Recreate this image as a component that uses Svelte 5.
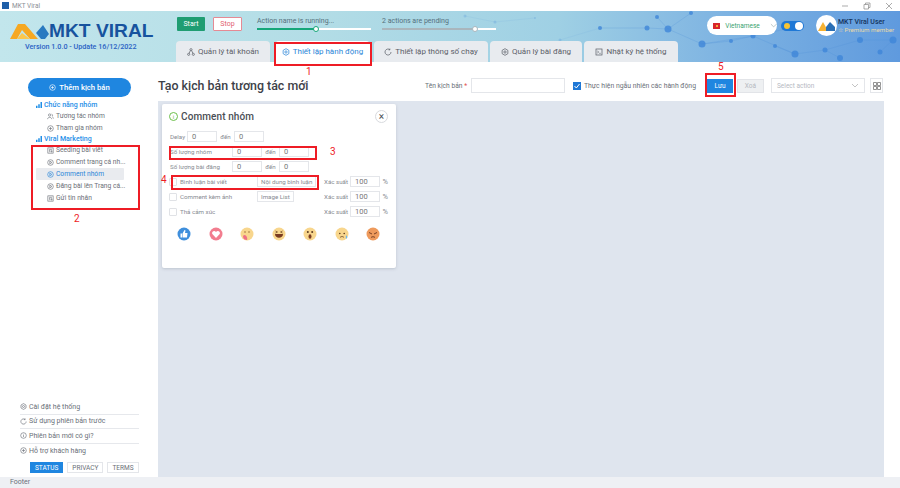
<script>
    const tabs = [
        { label: "Quản lý tài khoản", icon: "tree", width: 94 },
        { label: "Thiết lập hành động", icon: "gear", width: 95, active: true },
        { label: "Thiết lập thông số chạy", icon: "sync", width: 114 },
        { label: "Quản lý bài đăng", icon: "gear", width: 92 },
        { label: "Nhật ký hệ thống", icon: "log", width: 94 },
    ];
    const groupItems = [
        { label: "Tương tác nhóm", icon: "people" },
        { label: "Tham gia nhóm", icon: "plus" },
    ];
    const viralItems = [
        { label: "Seeding bài viết", icon: "doc" },
        { label: "Comment trang cá nh...", icon: "play" },
        { label: "Comment nhóm", icon: "play", active: true },
        { label: "Đăng bài lên Trang cá...", icon: "play" },
        { label: "Gửi tin nhắn", icon: "doc" },
    ];
    const bottomLinks = [
        { label: "Cài đặt hệ thống", icon: "gear" },
        { label: "Sử dụng phiên bản trước", icon: "sync" },
        { label: "Phiên bản mới có gì?", icon: "info" },
        { label: "Hỗ trợ khách hàng", icon: "plus" },
    ];
    const nodes = [
        [465, 16, 1.5], [495, 22, 1.5], [535, 18, 1], [560, 40, 1.5], [600, 28, 2], [647, 28, 2.5],
        [657, 17, 2], [668, 29, 3.5], [691, 13, 2], [702, 44, 3.5], [731, 41, 2], [753, 36, 2.5],
        [786, 29, 2], [795, 54, 3.5], [825, 50, 2.5], [860, 40, 3], [893, 40, 3.5], [880, 52, 2.5],
        [775, 46, 2], [840, 58, 3],
    ];
    const links = [
        [465, 16, 495, 22], [495, 22, 535, 18], [600, 28, 647, 28], [647, 28, 668, 29], [657, 17, 668, 29],
        [668, 29, 702, 44], [691, 13, 668, 29], [702, 44, 731, 41], [731, 41, 753, 36], [753, 36, 786, 29],
        [702, 44, 753, 36], [753, 36, 795, 54], [795, 54, 825, 50], [825, 50, 860, 40], [860, 40, 893, 40],
        [893, 40, 880, 52], [775, 46, 795, 54], [825, 50, 840, 58], [560, 40, 600, 28],
    ];
    const reactions = [
        { base: "#3f8fdc", kind: "like" },
        { base: "#f27d8f", kind: "love" },
        { base: "#f8d68d", kind: "care" },
        { base: "#f8d68d", kind: "haha" },
        { base: "#f8d68d", kind: "wow" },
        { base: "#f8d68d", kind: "sad" },
        { base: "#ee9a5c", kind: "angry" },
    ];
</script>

{#snippet icon(name)}
    <svg class="ico" viewBox="0 0 12 12" fill="none" stroke="currentColor" stroke-width="1.1">
        {#if name === "tree"}
            <circle cx="6" cy="2.5" r="1.6" /><circle cx="2.5" cy="9.5" r="1.6" /><circle cx="9.5" cy="9.5" r="1.6" />
            <path d="M5 4 3.2 8M7 4l1.8 4" />
        {:else if name === "gear"}
            <circle cx="6" cy="6" r="1.7" />
            <path d="M6 1 10.3 3.5V8.5L6 11 1.7 8.5V3.5Z" />
        {:else if name === "sync"}
            <path d="M10.5 6A4.5 4.5 0 1 1 8.8 2.5M8.8.8v2H6.8" />
        {:else if name === "log"}
            <rect x="1.5" y="1.5" width="9" height="9" /><path d="M3.5 4.5 5.5 6l-2 1.5M6.5 8h2" />
        {:else if name === "people"}
            <circle cx="4.5" cy="3.5" r="2" /><path d="M1 10.5c0-4 7-4 7 0M8 2c2 .5 2 3 .5 3.5M9 6.5c1.5.5 2 2 2 3" />
        {:else if name === "plus"}
            <circle cx="6" cy="6" r="4.8" /><path d="M6 3.5v5M3.5 6h5" />
        {:else if name === "doc"}
            <rect x="1.5" y="1.5" width="9" height="9" /><path d="M3.5 4h5M3.5 6h2M7 6.5h1.5v2H7zM3.5 8h2" />
        {:else if name === "play"}
            <circle cx="6" cy="6" r="4.8" /><path d="M4.8 3.6 8.4 6 4.8 8.4Z" />
        {:else if name === "info"}
            <circle cx="6" cy="6" r="4.8" /><path d="M6 5.3v3.2M6 3.2v1" />
        {/if}
    </svg>
{/snippet}

{#snippet bars()}
    <svg class="bars" viewBox="0 0 8 8" fill="#1f8fe8">
        <rect x="0" y="5" width="2" height="3" /><rect x="3" y="3" width="2" height="5" /><rect x="6" y="0" width="2" height="8" />
    </svg>
{/snippet}

<div class="app">
    <div class="titlebar">
        <div class="app-icon"></div>
        <span>MKT Viral</span>
        <div class="win-buttons">
            <svg viewBox="0 0 8 8"><path d="M1 4h6" /></svg>
            <svg viewBox="0 0 8 8"><path d="M1 2.5h4.5V7H1zM2.5 2.5V1H7v4.5H5.5" /></svg>
            <svg viewBox="0 0 8 8"><path d="M1 1l6 6M7 1 1 7" /></svg>
        </div>
    </div>

    <header class="header">
        <svg class="network" viewBox="0 0 900 51" preserveAspectRatio="none">
            <g transform="translate(0 -11)">
                {#each links as l}
                    <line class:faint={l[0] < 600} x1={l[0]} y1={l[1]} x2={l[2]} y2={l[3]} />
                {/each}
                {#each nodes as n}
                    <circle class:faint={n[0] < 600} cx={n[0]} cy={n[1]} r={n[2]} />
                {/each}
            </g>
        </svg>

        <div class="brand">
            <div class="logo">
                <svg width="39" height="18" viewBox="0 0 39 18">
                    <path d="M0 17 8 2h7l13 15H20L12 8 7 17Z" fill="#f6a821" />
                    <path d="M7 17 12 11 20 17Z" fill="#fbc74e" />
                    <path d="M26 11 33 3l6 9-4 5h-4Z" fill="#2a7ac0" />
                </svg>
                <span>MKT VIRAL</span>
            </div>
            <div class="version">Version 1.0.0 - Update 16/12/2022</div>
        </div>

        <div class="center">
            <div class="controls">
                <button class="start">Start</button>
                <button class="stop">Stop</button>
                <div class="progress first">
                    <span>Action name is running...</span>
                    <div class="track"><div class="fill"></div><div class="knob"></div></div>
                </div>
                <div class="progress second">
                    <span>2 actions are pending</span>
                    <div class="track"><div class="fill"></div><div class="knob"></div></div>
                </div>
            </div>
            <nav class="tabs">
                {#each tabs as tab}
                    <div class="tab" class:active={tab.active} style="width:{tab.width}px">
                        {@render icon(tab.icon)}
                        <span>{tab.label}</span>
                    </div>
                {/each}
            </nav>
        </div>

        <div class="user-area">
            <div class="lang">
                <span class="flag"><i></i></span>
                <span class="lang-name">Vietnamese</span>
                <svg viewBox="0 0 8 5" width="8" height="5"><path d="M1 1l3 3 3-3" /></svg>
            </div>
            <div class="theme"><i class="sun"></i><i class="dot"></i></div>
            <div class="avatar">
                <svg width="18" height="10" viewBox="0 0 18 10">
                    <path d="M0 10 5 1l5 9Z" fill="#f6b233" />
                    <path d="M8 10V6l4-5 5 5v4Z" fill="#2a6fb5" />
                </svg>
            </div>
            <div class="user-text">
                <b>MKT Viral User</b>
                <span>☆ Premium member</span>
            </div>
        </div>
    </header>

    <div class="body">
        <aside class="sidebar">
            <button class="add">{@render icon("plus")} Thêm kịch bản</button>
            <div class="menu">
                <div class="group">{@render bars()} Chức năng nhóm</div>
                {#each groupItems as item}
                    <div class="item">{@render icon(item.icon)}<span>{item.label}</span></div>
                {/each}
                <div class="group">{@render bars()} Viral Marketing</div>
                {#each viralItems as item}
                    <div class="item" class:active={item.active}>{@render icon(item.icon)}<span>{item.label}</span></div>
                {/each}
            </div>
            <div class="bottom">
                {#each bottomLinks as link}
                    <div class="link">{@render icon(link.icon)}<span>{link.label}</span></div>
                {/each}
                <div class="legal">
                    <span class="on">STATUS</span>
                    <span>PRIVACY</span>
                    <span>TERMS</span>
                </div>
            </div>
        </aside>

        <main class="main">
            <div class="toolbar">
                <h1>Tạo kịch bản tương tác mới</h1>
                <label class="name-label" for="script-name">Tên kịch bản <em>*</em></label>
                <input id="script-name" class="name-input" />
                <span class="random-check"><svg viewBox="0 0 8 8"><path d="M1.500 4 3.300 6 6.500 2" /></svg></span>
                <span class="random-text">Thực hiện ngẫu nhiên các hành động</span>
                <button class="save">Lưu</button>
                <button class="del">Xoá</button>
                <div class="select">
                    <span>Select action</span>
                    <svg viewBox="0 0 8 5" width="8" height="5"><path d="M1 1l3 3 3-3" /></svg>
                </div>
                <div class="grid-btn">
                    <svg viewBox="0 0 8 8" width="8" height="8"><path d="M.5.500h3v3h-3zM4.500.500h3v3h-3zM.5 4.500h3v3h-3zM4.500 4.500h3v3h-3z" /></svg>
                </div>
            </div>

            <div class="canvas">
                <section class="card">
                    <div class="card-head">
                        <span class="info-ring">i</span>
                        <strong>Comment nhóm</strong>
                        <span class="close">×</span>
                    </div>

                    <div class="row delay">
                        <span class="label short">Delay</span>
                        <span class="num">0</span>
                        <span class="den">đến</span>
                        <span class="num">0</span>
                    </div>
                    <div class="row">
                        <span class="label">Số lượng nhóm</span>
                        <span class="num">0</span>
                        <span class="den">đến</span>
                        <span class="num">0</span>
                    </div>
                    <div class="row">
                        <span class="label">Số lượng bài đăng</span>
                        <span class="num">0</span>
                        <span class="den">đến</span>
                        <span class="num">0</span>
                    </div>

                    <div class="row">
                        <span class="box"></span>
                        <span class="check-label">Bình luận bài viết</span>
                        <span class="mini">Nội dung bình luận</span>
                        <span class="chance">Xác suất</span>
                        <span class="num">100</span>
                        <span class="pct">%</span>
                    </div>
                    <div class="row">
                        <span class="box"></span>
                        <span class="check-label">Comment kèm ảnh</span>
                        <span class="mini">Image List</span>
                        <span class="chance">Xác suất</span>
                        <span class="num">100</span>
                        <span class="pct">%</span>
                    </div>
                    <div class="row">
                        <span class="box"></span>
                        <span class="check-label">Thả cảm xúc</span>
                        <span class="chance">Xác suất</span>
                        <span class="num">100</span>
                        <span class="pct">%</span>
                    </div>

                    <div class="reactions">
                        {#each reactions as r}
                            <svg width="14" height="14" viewBox="0 0 14 14">
                                <circle cx="7" cy="7" r="6.500" fill={r.base} />
                                {#if r.kind === "like"}
                                    <path d="M3.500 6.500h1.500v4H3.500ZM5.500 6.500 7.500 3l1 .5-.5 2.500h2.500l-.5 4.500H5.500Z" fill="#fff" />
                                {:else if r.kind === "love"}
                                    <path d="M7 11 3.300 7C2 4.800 5.500 2.600 7 5c1.500-2.400 5-.2 3.700 2Z" fill="#fff" />
                                {:else if r.kind === "care"}
                                    <circle cx="5" cy="5" r=".7" fill="#8a5a2b" /><circle cx="9" cy="5" r=".7" fill="#8a5a2b" />
                                    <path d="M3 9c2-3 5 1 4 4-2 0-4-1-4-4Z" fill="#ef6f86" />
                                {:else if r.kind === "haha"}
                                    <path d="M3.500 4 5.500 5 3.500 6M10.500 4 8.500 5 10.500 6" stroke="#6b4423" stroke-width=".7" fill="none" />
                                    <path d="M3 7h8c0 5-8 5-8 0Z" fill="#7a3c22" />
                                {:else if r.kind === "wow"}
                                    <circle cx="4.800" cy="5" r="1" fill="#5b3a1e" /><circle cx="9.200" cy="5" r="1" fill="#5b3a1e" />
                                    <ellipse cx="7" cy="9.500" rx="1.500" ry="2.200" fill="#7a3c22" />
                                {:else if r.kind === "sad"}
                                    <circle cx="4.800" cy="6.500" r=".8" fill="#5b3a1e" /><circle cx="9.200" cy="6.500" r=".8" fill="#5b3a1e" />
                                    <path d="M5 10.500c1-1.300 3-1.300 4 0" stroke="#5b3a1e" stroke-width=".7" fill="none" />
                                    <path d="M11.500 8c1 1.500 1 3.500 0 3.500S10.500 9.500 11.500 8Z" fill="#66b7ee" />
                                {:else}
                                    <path d="M3 5.500 6 7M11 5.500 8 7" stroke="#5b2a16" stroke-width=".8" />
                                    <path d="M5 10.500c1-1 3-1 4 0" stroke="#5b2a16" stroke-width=".8" fill="none" />
                                {/if}
                            </svg>
                        {/each}
                    </div>
                </section>
            </div>
        </main>
    </div>

    <footer class="footer">Footer</footer>

    <!-- annotations drawn on top of the screenshot -->
    <div class="mark m1"></div><b class="num-mark n1">1</b>
    <div class="mark m2"></div><b class="num-mark n2">2</b>
    <div class="mark m3"></div><b class="num-mark n3">3</b>
    <div class="mark m4"></div><b class="num-mark n4">4</b>
    <div class="mark m5"></div><b class="num-mark n5">5</b>
</div>

<style>
    :global(body) {
        margin: 0;
        overflow: hidden;
    }
    .app {
        position: relative;
        width: 900px;
        height: 488px;
        display: flex;
        flex-direction: column;
        background: #fff;
        color: #6a6f78;
        font-family: Roboto, "Noto Sans", sans-serif;
        font-size: 7px;
    }
    .ico {
        width: 7px;
        height: 7px;
        flex: none;
    }
    button {
        font-family: inherit;
        border: none;
        padding: 0;
    }

    .titlebar {
        height: 11px;
        flex: none;
        display: flex;
        align-items: center;
        gap: 3px;
        padding-left: 2px;
        font-size: 6.500px;
        color: #8a8f96;
    }
    .app-icon {
        width: 7px;
        height: 7px;
        background: #1f5fa8;
    }
    .win-buttons {
        margin-left: auto;
        display: flex;
        gap: 14px;
        padding-right: 7px;
    }
    .win-buttons svg {
        width: 8px;
        height: 8px;
        fill: none;
        stroke: #888;
        stroke-width: 0.7;
    }

    .header {
        position: relative;
        height: 51px;
        flex: none;
        display: flex;
        overflow: hidden;
        background: linear-gradient(90deg, #c2e6ec 0%, #b3dde6 35%, #9fd0e4 62%, #7fb4e2 80%, #5f9ade 100%);
    }
    .network {
        position: absolute;
        inset: 0;
        width: 100%;
        height: 100%;
    }
    .network line {
        stroke: #4f8fd8;
        stroke-width: 0.4;
        opacity: 0.6;
    }
    .network circle {
        fill: #3f86d8;
        opacity: 0.8;
    }
    .network .faint {
        opacity: 0.22;
    }
    .brand {
        position: relative;
        width: 176px;
        flex: none;
        display: flex;
        flex-direction: column;
        padding: 9px 0 0 10px;
        box-sizing: border-box;
    }
    .logo {
        display: flex;
        align-items: center;
        height: 19px;
        margin-top: 1px;
    }
    .logo span {
        font: 700 19.200px/19px "Liberation Sans", sans-serif;
        color: #17539e;
        white-space: nowrap;
    }
    .version {
        margin: 2px 0 0 15px;
        font-size: 7.200px;
        font-weight: 500;
        color: #2a62c4;
        white-space: nowrap;
    }
    .center {
        position: relative;
        display: flex;
        flex-direction: column;
        justify-content: space-between;
    }
    .controls {
        display: flex;
        height: 30px;
        padding: 6px 0 0 1px;
        box-sizing: border-box;
    }
    .start,
    .stop {
        width: 28px;
        height: 14px;
        font-size: 7px;
        border-radius: 1px;
    }
    .start {
        background: #1f9d72;
        color: #fff;
    }
    .stop {
        width: 29px;
        margin-left: 8px;
        background: #fff;
        color: #e2606e;
        border: 1px solid #e58a94;
        box-sizing: border-box;
    }
    .progress {
        position: relative;
        width: 114px;
        display: flex;
        flex-direction: column;
        gap: 3px;
        font-size: 7px;
        color: #55707c;
    }
    .progress.first {
        margin-left: 15px;
    }
    .progress.second {
        margin-left: 11px;
    }
    .track {
        position: relative;
        height: 1.500px;
        background: #fff;
    }
    .fill {
        height: 100%;
    }
    .first .fill {
        width: 50%;
        background: #16a679;
    }
    .second .fill {
        width: 80%;
        background: #a9b6bd;
    }
    .knob {
        position: absolute;
        top: -2.500px;
        width: 6px;
        height: 6px;
        border-radius: 50%;
        background: #fff;
        border: 1px solid #16a679;
        box-sizing: border-box;
    }
    .first .knob {
        left: 49%;
    }
    .second .knob {
        left: 79%;
        border-color: #a9b6bd;
    }
    .tabs {
        display: flex;
        gap: 2px;
        height: 21px;
    }
    .tab {
        display: flex;
        align-items: center;
        justify-content: center;
        gap: 3px;
        height: 21px;
        background: #e8ebef;
        border-radius: 4px 4px 0 0;
        font-size: 8px;
        color: #5c6068;
        box-sizing: border-box;
        white-space: nowrap;
    }
    .tab .ico {
        width: 8px;
        height: 8px;
    }
    .tab:first-child {
        margin-right: 3px;
    }
    .tab.active {
        background: #fff;
        color: #2c86d8;
        margin-right: 2px;
    }
    .user-area {
        position: absolute;
        left: 707px;
        top: 4px;
        display: flex;
        align-items: center;
    }
    .lang {
        width: 70px;
        height: 19px;
        border-radius: 10px;
        background: #fff;
        display: flex;
        align-items: center;
        gap: 5px;
        padding-left: 6px;
        box-sizing: border-box;
        color: #3aa36f;
        font-size: 6.500px;
    }
    .lang svg {
        margin-left: 5px;
        fill: none;
        stroke: #9aa;
        stroke-width: 0.7;
    }
    .flag {
        width: 8px;
        height: 6px;
        background: #d8262c;
        display: flex;
        align-items: center;
        justify-content: center;
    }
    .flag i {
        width: 2px;
        height: 2px;
        background: #ffd83d;
        border-radius: 50%;
    }
    .theme {
        width: 23px;
        height: 10px;
        margin-left: 4px;
        border-radius: 5px;
        background: #1f78d6;
        display: flex;
        align-items: center;
        justify-content: space-between;
        padding: 0 1px 0 3px;
        box-sizing: border-box;
    }
    .sun {
        width: 6px;
        height: 6px;
        border-radius: 50%;
        background: #f7c434;
    }
    .dot {
        width: 8px;
        height: 8px;
        border-radius: 50%;
        background: #fff;
    }
    .avatar {
        width: 21px;
        height: 21px;
        margin-left: 12px;
        border-radius: 50%;
        background: #fff;
        display: flex;
        align-items: center;
        justify-content: center;
    }
    .user-text {
        display: flex;
        flex-direction: column;
        margin-left: 1px;
        line-height: 8px;
        white-space: nowrap;
    }
    .user-text b {
        font-size: 7px;
        font-weight: 500;
        color: #14345e;
    }
    .user-text span {
        font-size: 6.200px;
        color: #e9d9a8;
    }

    .body {
        flex: 1;
        min-height: 0;
        display: flex;
    }
    .sidebar {
        width: 158px;
        flex: none;
        display: flex;
        flex-direction: column;
    }
    .add {
        width: 103px;
        height: 19px;
        margin: 16px 0 0 28px;
        flex: none;
        display: flex;
        align-items: center;
        justify-content: center;
        gap: 3px;
        border-radius: 10px;
        background: #1f86e0;
        color: #fff;
        font-size: 7.700px;
        font-weight: 500;
    }
    .menu {
        margin: 3px 0 0 36px;
        width: 88px;
    }
    .group {
        display: flex;
        align-items: center;
        gap: 2px;
        height: 10px;
        color: #1f8fe8;
        font-size: 7px;
        font-weight: 500;
    }
    .bars {
        width: 6px;
        height: 6px;
    }
    .item {
        display: flex;
        align-items: center;
        gap: 2px;
        height: 12px;
        padding-left: 11px;
        border-radius: 1px;
        color: #6c7078;
        font-size: 6.700px;
        white-space: nowrap;
    }
    .item.active {
        background: #e9ebef;
        color: #2c86d8;
    }
    .bottom {
        margin: auto 0 4px 20px;
        width: 119px;
    }
    .link {
        display: flex;
        align-items: center;
        gap: 2px;
        height: 14.500px;
        box-sizing: border-box;
        border-bottom: 1px solid #e6e8ec;
        font-size: 7px;
    }
    .link:nth-child(4) {
        border-bottom: none;
    }
    .legal {
        display: flex;
        gap: 4px;
        margin: 4px 0 0 10px;
        height: 11px;
    }
    .legal span {
        display: flex;
        align-items: center;
        padding: 0 4px;
        border: 1px solid #e4e6ea;
        box-sizing: border-box;
        font-size: 6.500px;
    }
    .legal .on {
        background: #1f86e0;
        border-color: #1f86e0;
        color: #fff;
    }

    .main {
        flex: 1;
        display: flex;
        flex-direction: column;
        padding-right: 16px;
        min-width: 0;
    }
    .toolbar {
        height: 39px;
        flex: none;
        display: flex;
        align-items: center;
        box-sizing: border-box;
        padding-top: 8px;
    }
    h1 {
        width: 267px;
        flex: none;
        margin: 0;
        font-size: 12.400px;
        font-weight: 500;
        color: #3d4148;
        white-space: nowrap;
    }
    .name-label {
        width: 46px;
        flex: none;
        font-size: 6.700px;
        white-space: nowrap;
    }
    .name-label em {
        color: #e2504c;
        font-style: normal;
    }
    .name-input {
        width: 94px;
        height: 15px;
        flex: none;
        padding: 0;
        margin: 0;
        box-sizing: border-box;
        border: 1px solid #e4e6ea;
    }
    .random-check {
        width: 8px;
        height: 8px;
        margin-left: 8px;
        background: #1f78d6;
        display: flex;
    }
    .random-check svg {
        fill: none;
        stroke: #fff;
        stroke-width: 1;
    }
    .random-text {
        width: 123px;
        flex: none;
        margin-left: 3px;
        font-size: 6.850px;
        white-space: nowrap;
    }
    .save {
        width: 26px;
        height: 14px;
        flex: none;
        background: #1f86e0;
        color: #fff;
        font-size: 6.500px;
    }
    .del {
        width: 27px;
        height: 14px;
        flex: none;
        margin-left: 4px;
        background: #eef0f2;
        border: 1px solid #e2e4e8;
        box-sizing: border-box;
        color: #b5b9bf;
        font-size: 6.500px;
    }
    .select {
        width: 94px;
        height: 15px;
        flex: none;
        margin-left: 7px;
        padding: 0 5px;
        border: 1px solid #e4e6ea;
        box-sizing: border-box;
        display: flex;
        align-items: center;
        justify-content: space-between;
        color: #b5b9bf;
        font-size: 6.500px;
    }
    .select svg {
        fill: none;
        stroke: #aaa;
        stroke-width: 0.7;
    }
    .grid-btn {
        width: 13px;
        height: 15px;
        flex: none;
        margin-left: 5px;
        border: 1px solid #e4e6ea;
        box-sizing: border-box;
        display: flex;
        align-items: center;
        justify-content: center;
    }
    .grid-btn svg {
        fill: none;
        stroke: #777;
        stroke-width: 0.8;
    }
    .canvas {
        flex: 1;
        min-height: 0;
        padding: 3px 0 0 4px;
        background: #dfe5ee;
    }
    .card {
        width: 234px;
        height: 164px;
        box-sizing: border-box;
        padding: 0 8px;
        background: #fff;
        border-radius: 2px;
        box-shadow: 0 1px 3px rgba(90, 100, 120, 0.25);
    }
    .card-head {
        display: flex;
        align-items: center;
        height: 24px;
        gap: 3px;
        color: #4a4e55;
    }
    .info-ring {
        width: 9px;
        height: 9px;
        margin-left: -1px;
        border: 1px solid #6cc04a;
        border-radius: 50%;
        color: #6cc04a;
        box-sizing: border-box;
        display: flex;
        align-items: center;
        justify-content: center;
        font-size: 6px;
    }
    .card-head strong {
        font-size: 10px;
        font-weight: 500;
        letter-spacing: 0.1px;
    }
    .close {
        width: 11px;
        height: 11px;
        margin-left: auto;
        border: 1px solid #d8dade;
        border-radius: 50%;
        display: flex;
        align-items: center;
        justify-content: center;
        font-size: 10px;
    }
    .row {
        display: flex;
        align-items: center;
        height: 15px;
        font-size: 6.200px;
        color: #878b92;
        white-space: nowrap;
    }
    .delay {
        margin-top: 1px;
    }
    .label {
        width: 62px;
        flex: none;
    }
    .label.short {
        width: 17px;
    }
    .num {
        width: 30px;
        height: 11px;
        flex: none;
        padding-left: 4px;
        border: 1px solid #e4e6ea;
        box-sizing: border-box;
        display: flex;
        align-items: center;
        font-size: 7.500px;
        color: #777;
    }
    .den {
        width: 17px;
        flex: none;
        text-align: center;
    }
    .box {
        width: 8px;
        height: 8px;
        flex: none;
        margin-left: -1px;
        border: 1px solid #e0e2e6;
        border-radius: 1px;
        box-sizing: border-box;
    }
    .check-label {
        width: 77px;
        flex: none;
        margin-left: 3px;
    }
    .mini {
        display: flex;
        align-items: center;
        height: 11px;
        padding: 0 3px;
        border: 1px solid #e4e6ea;
        box-sizing: border-box;
        flex: none;
    }
    .chance {
        margin-left: auto;
        width: 26px;
        flex: none;
    }
    .pct {
        width: 8px;
        flex: none;
        text-align: right;
        font-size: 7.500px;
    }
    .reactions {
        display: flex;
        justify-content: space-between;
        padding: 8px 8px 0 7px;
    }

    .footer {
        height: 11px;
        flex: none;
        padding-left: 10px;
        background: #eef0f4;
        font-size: 7px;
        line-height: 11px;
    }

    .mark {
        position: absolute;
        border: 2px solid #ee1c25;
        box-sizing: border-box;
    }
    .m1 { left: 274px; top: 42px; width: 98px; height: 24px; }
    .m2 { left: 31px; top: 145px; width: 109px; height: 65px; }
    .m3 { left: 169px; top: 146px; width: 148px; height: 14px; }
    .m4 { left: 171px; top: 175px; width: 148px; height: 15px; }
    .m5 { left: 705px; top: 73px; width: 31px; height: 24px; }
    .num-mark {
        position: absolute;
        color: #ee1c25;
        font-size: 10px;
        font-weight: 400;
        line-height: 10px;
    }
    .n1 { left: 306px; top: 67px; }
    .n2 { left: 74px; top: 214px; }
    .n3 { left: 330px; top: 147px; }
    .n4 { left: 161px; top: 175px; }
    .n5 { left: 718px; top: 62px; }
</style>
